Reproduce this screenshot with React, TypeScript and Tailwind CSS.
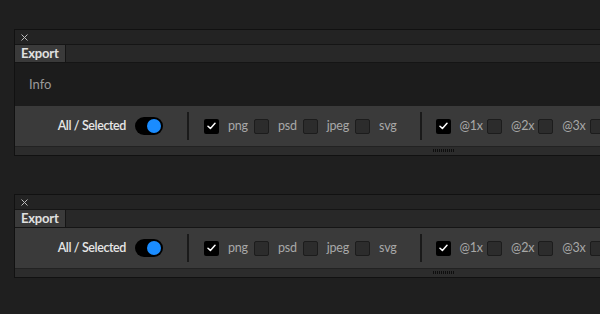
import React from "react"

const font = { fontFamily: '"Lato", "Open Sans", sans-serif' }

const Check = ({ on }: { on?: boolean }) => (
  <div
    className={`w-[15px] h-[15px] shrink-0 rounded-[2px] flex items-center justify-center ${
      on ? "bg-black" : "bg-[#2c2c2c] border border-[#1c1c1c]"
    }`}
  >
    {on && (
      <svg width="9" height="8" viewBox="0 0 9 8" fill="none">
        <path d="M1 4.2L3.4 6.4L8 1.2" stroke="#fff" strokeWidth="1.5" strokeLinecap="round" strokeLinejoin="round" />
      </svg>
    )}
  </div>
)

const Opt = ({ label, on, tight }: { label: string; on?: boolean; tight?: boolean }) => (
  <div className="flex items-center">
    <Check on={on} />
    <span
      className={`ml-[9px] text-[12.5px] tracking-[-0.2px] text-[#a8a8a8] ${tight ? "mr-[4px]" : "mr-[6px]"}`}
    >
      {label}
    </span>
  </div>
)

const Toolbar = () => (
  <div className="h-[40px] bg-[#3a3a3a] flex items-center">
    <div className="w-[111px] shrink-0 text-right text-[12.5px] font-semibold text-[#e6e6e6] tracking-[-0.4px]">
      All / Selected
    </div>
    <div className="ml-[9px] w-[28px] h-[18px] shrink-0 rounded-full bg-black flex items-center justify-end pr-[2px]">
      <div className="w-[14px] h-[14px] rounded-full bg-[#1a8cff]" />
    </div>
    <div className="ml-[24px] w-[2px] h-[28px] shrink-0 bg-[#1a1a1a]" />
    <div className="ml-[15px] flex items-center">
      <Opt label="png" on />
      <Opt label="psd" />
      <Opt label="jpeg" />
      <Opt label="svg" />
    </div>
    <div className="ml-[17px] w-[2px] h-[28px] shrink-0 bg-[#1a1a1a]" />
    <div className="ml-[14px] flex items-center">
      <Opt label="@1x" on tight />
      <Opt label="@2x" tight />
      <Opt label="@3x" tight />
      <Check />
    </div>
  </div>
)

const Grip = () => (
  <div className="h-[9px] bg-[#2c2c2c] border-t border-[#222] flex pl-[418px]">
    <div className="mt-[2px] flex gap-[1px]">
      {Array.from({ length: 11 }).map((_, i) => (
        <div key={i} className="w-[1px] h-[3px] bg-[#0e0e0e]" />
      ))}
    </div>
  </div>
)

const Panel = ({ info }: { info?: boolean }) => (
  <div className="w-[620px] border border-[#111] bg-[#262626]">
    <div className="h-[14px] bg-[#232323] flex items-center pl-[6px]">
      <svg width="7" height="7" viewBox="0 0 7 7">
        <path d="M0.5 0.5L6.5 6.5M6.5 0.5L0.5 6.5" stroke="#bbb" strokeWidth="1" />
      </svg>
    </div>
    <div className="h-[19px] flex border-t border-[#151515] border-b border-b-[#151515] bg-[#282828]">
      <div className="w-[51px] bg-[#3a3a3a] border-r border-[#151515] text-[13px] font-bold text-[#e0e0e0] pl-[6px] leading-[17px] tracking-[-0.2px]">
        Export
      </div>
    </div>
    {info && (
      <div className="h-[43px] bg-[#1c1c1c] flex items-center pl-[14px] text-[13px] text-[#9a9a9a]">Info</div>
    )}
    <Toolbar />
    <Grip />
  </div>
)

export default function App() {
  return (
    <div style={font} className="w-[600px] h-[314px] bg-[#1f1f1f] overflow-hidden pt-[29px] pl-[14px]">
      <Panel info />
      <div className="h-[38px]" />
      <Panel />
    </div>
  )
}
